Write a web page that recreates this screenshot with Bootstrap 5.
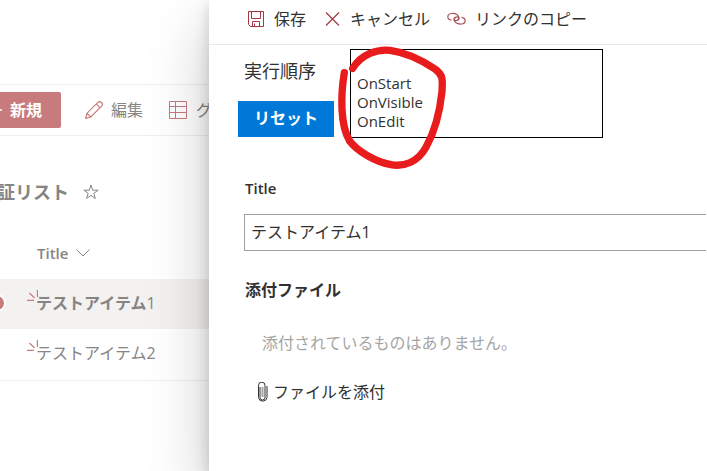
<!DOCTYPE html>
<html lang="ja">
<head>
<meta charset="utf-8">
<meta name="viewport" content="width=device-width, initial-scale=1">
<title>証リスト</title>
<link href="https://cdn.jsdelivr.net/npm/bootstrap@5.3.0/dist/css/bootstrap.min.css" rel="stylesheet">
<style>
body{font-family:"Open Sans","Noto Sans CJK JP",sans-serif;font-size:16px;line-height:24px;color:#323130;background:#fff}
.list-side{width:209px;color:#868584}
/* the list is scrolled sideways under the panel */
.list-page{margin-left:-48px;padding-top:84px}
.cmds{height:52px;border-top:1px solid #efefee;border-bottom:1px solid #efefee;padding-left:24px}
.btn-new{width:85px;height:36px;background:#c77b7d;color:#fff;border-radius:2px;font-weight:700;gap:8px;padding:0 18px 0 0;white-space:nowrap}
.cmds button{flex-shrink:0}
.plain{background:none;border:0;padding:0;color:inherit;display:flex;align-items:center;white-space:nowrap}
.grid-btn{margin-left:25px}
.head-row{padding:43px 0 0 45px;gap:13px}
.list-title{font-size:18px;line-height:26px;font-weight:700;margin:0}
.items{width:100%;margin-top:24px;border-collapse:collapse;white-space:nowrap}
.items th{font-size:15px;font-weight:600;height:49px;border-bottom:1px solid #efefee}
.items td{height:51px;border-bottom:1px solid #efefee;padding-bottom:3px}
.items .picked td{background:#f3f2f1;border-top:2px solid #fff;border-bottom:0;font-weight:700}
.items .picked .num{font-weight:400}
.pick-col{width:74px;padding-left:38px}
.pick-box{appearance:none;width:14px;height:14px;margin:0;display:block;border-radius:50%}
.pick-box:checked{background:#c77b7d;box-shadow:0 0 0 2px #fff}
.name-cell{display:flex;align-items:center}
.name-head{padding-left:10px}
.spark{margin:-14px -2px 0 0}
.edit-panel{background:#fff;box-shadow:0 26px 58px rgba(0,0,0,.22),0 5px 14px rgba(0,0,0,.18)}
.panel-cmds{height:45px;border-bottom:1px solid #eaeaea;padding:0 0 6px 38px;gap:17px}
.panel-cmds .plain{gap:9px}
.order{padding:4px 0 0 29px;gap:16px}
.order-left{width:96px}
.order-name{font-size:18px;line-height:26px;margin:9px 0 17px 6px}
.btn-reset{height:36px;background:#0078d7;color:#fff;border-radius:0;font-weight:700;padding:0 0 2px}
.btn-reset:hover{background:#106ebe;color:#fff}
.order-box{width:253px;height:89px;border:1px solid #000;padding:24px 6px 0;font-size:15px;line-height:19px}
.ring{left:111px;top:40px;pointer-events:none}
.fields{padding:38px 0 0 36px}
.field-name{font-size:16px;font-weight:700;margin:0;line-height:24px}
.latin{font-size:15px;font-weight:600}
.title-box{border:1px solid #a19f9d;border-right:0;border-radius:0;height:37px;padding:0 6px 3px;font-size:16px;color:#323130;margin:14px 0 27px -1px}
.none-msg{color:#a6a5a4;margin:29px 0 25px 17px}
</style>
<script src="https://cdn.jsdelivr.net/npm/bootstrap@5.3.0/dist/js/bootstrap.bundle.min.js"></script>
</head>
<body>
<div class="d-flex min-vh-100 overflow-hidden">
<section class="list-side flex-shrink-0" aria-label="リスト">
 <div class="list-page">
  <div class="cmds d-flex align-items-center">
   <button type="button" class="btn btn-new d-flex align-items-center justify-content-end"><svg width="14" height="14" viewBox="0 0 14 14" stroke="#fff" stroke-width="1.5"><path d="M7 0v14M0 7h14"/></svg>新規</button>
   <button type="button" class="plain ms-4 gap-2"><svg width="18" height="18" viewBox="0 0 18 18" fill="none" stroke="#c77b7d" stroke-width="1.2"><path d="M.7 17.3 2 12.2 12.800 1.400Q14.600-.2 16.500 1.500T16.600 5.200L5.800 16ZM2 12.200 5.800 16M11.300 2.900l3.800 3.800"/></svg>編集</button>
   <button type="button" class="plain grid-btn gap-2"><svg width="20" height="18" viewBox="0 0 20 18" fill="none" stroke="#c77b7d"><path d="M1.500.5h17v17h-17zM7.500.5v17M1.500 5.500h17M1.500 11.500h17"/></svg>グ</button>
  </div>
  <div class="head-row d-flex align-items-center">
   <h1 class="list-title text-nowrap">証リスト</h1>
   <button type="button" class="plain" aria-label="お気に入り"><svg width="18" height="18" viewBox="0 0 18 18" fill="none" stroke="#868584"><path d="m9 2 1.700 5.200h5.400l-4.300 3.100 1.600 5.200L9 12.300l-4.400 3.200 1.600-5.200-4.300-3.100h5.400z"/></svg></button>
  </div>
  <table class="items">
   <thead><tr><th class="pick-col"></th><th><div class="name-head d-flex align-items-center gap-2"><span>Title</span><svg width="14" height="8" viewBox="0 0 14 8" fill="none" stroke="#868584"><path d="m.5.5 6.500 6.500L13.500.5"/></svg></div></th></tr></thead>
   <tbody>
    <tr class="picked"><td class="pick-col"><input class="pick-box" type="checkbox" checked aria-label="テストアイテム1を選択"></td><td><div class="name-cell"><svg class="spark" width="11" height="12" viewBox="0 0 11 12" stroke="#c77b7d" stroke-width="1.200"><path d="M10.400 0v7M2.500 3l5 5M0 10.400h7"/></svg><span>テストアイテム<span class="num">1</span></span></div></td></tr>
    <tr><td class="pick-col"><input class="pick-box" type="checkbox" aria-label="テストアイテム2を選択"></td><td><div class="name-cell"><svg class="spark" width="11" height="12" viewBox="0 0 11 12" stroke="#c77b7d" stroke-width="1.200"><path d="M10.400 0v7M2.500 3l5 5M0 10.400h7"/></svg><span>テストアイテム2</span></div></td></tr>
   </tbody>
  </table>
 </div>
</section>
<main class="edit-panel flex-fill position-relative">
 <div class="panel-cmds d-flex align-items-center">
  <button type="button" class="plain"><svg width="18" height="16" viewBox="0 0 18 16" fill="none" stroke="#a4373f"><path d="M1.500.5h15v15H3.500l-2-2zM4.500.5v7h9v-7M5.500 15.500v-5h7v5M7.500 15.500v-3"/></svg>保存</button>
  <button type="button" class="plain"><svg width="18" height="16" viewBox="0 0 18 16" fill="none" stroke="#a4373f" stroke-width="1.200"><path d="m3 1.500 13 13M16 1.500 3 14.500"/></svg>キャンセル</button>
  <button type="button" class="plain"><svg width="19" height="14" viewBox="0 0 19 14" fill="none" stroke="#a85058" stroke-width="1.200"><path d="M4.500 8.200C-.5 7.500-.3 2 4.500 1.500 9 1 12.500 3.500 11.800 6.300 11 9.300 7 9.200 7 7.200 7 6 7.800 5.300 8.800 5.300"/><path d="M14.500 5.300c5 .7 4.800 6.200 0 6.700-4.500.5-8-2-7.300-4.800.8-3 4.800-2.900 4.800-.9 0 1.200-.8 1.900-1.800 1.900"/></svg>リンクのコピー</button>
 </div>
 <div class="order d-flex align-items-start">
  <div class="order-left">
   <div class="order-name text-nowrap">実行順序</div>
   <button type="button" class="btn btn-reset w-100">リセット</button>
  </div>
  <div class="order-box">OnStart<br>OnVisible<br>OnEdit</div>
 </div>
 <svg class="ring position-absolute" width="140" height="140" viewBox="0 0 420 420" fill="none" stroke="#e81c1c" stroke-width="22" stroke-linecap="round" stroke-linejoin="round" aria-hidden="true"><path d="M98 85C125 42 172 27 210 31C262 38 308 62 345 87C372 107 367 122 366 155C360 212 343 277 318 322C293 367 252 381 213 374C168 366 112 334 89 303C60 255 62 165 73 98"/></svg>
 <div class="fields">
  <label class="field-name latin d-block" for="item-title">Title</label>
  <input id="item-title" class="title-box d-block w-100" type="text" value="テストアイテム1">
  <h2 class="field-name">添付ファイル</h2>
  <p class="none-msg">添付されているものはありません。</p>
  <button type="button" class="plain ms-2 ps-1 gap-1"><svg width="12" height="20" viewBox="0 0 12 20" fill="none" stroke="#323130"><path d="M3 5v10.500a2.500 2.500 0 0 0 5 0V3.500a3.200 3.200 0 0 0-6.500-.2V15.500a4.300 4.300 0 0 0 8.500 0V4"/><path d="M5.500 5v10" stroke="#a6a5a4" stroke-width="2"/></svg>ファイルを添付</button>
 </div>
</main>
</div>
</body>
</html>
